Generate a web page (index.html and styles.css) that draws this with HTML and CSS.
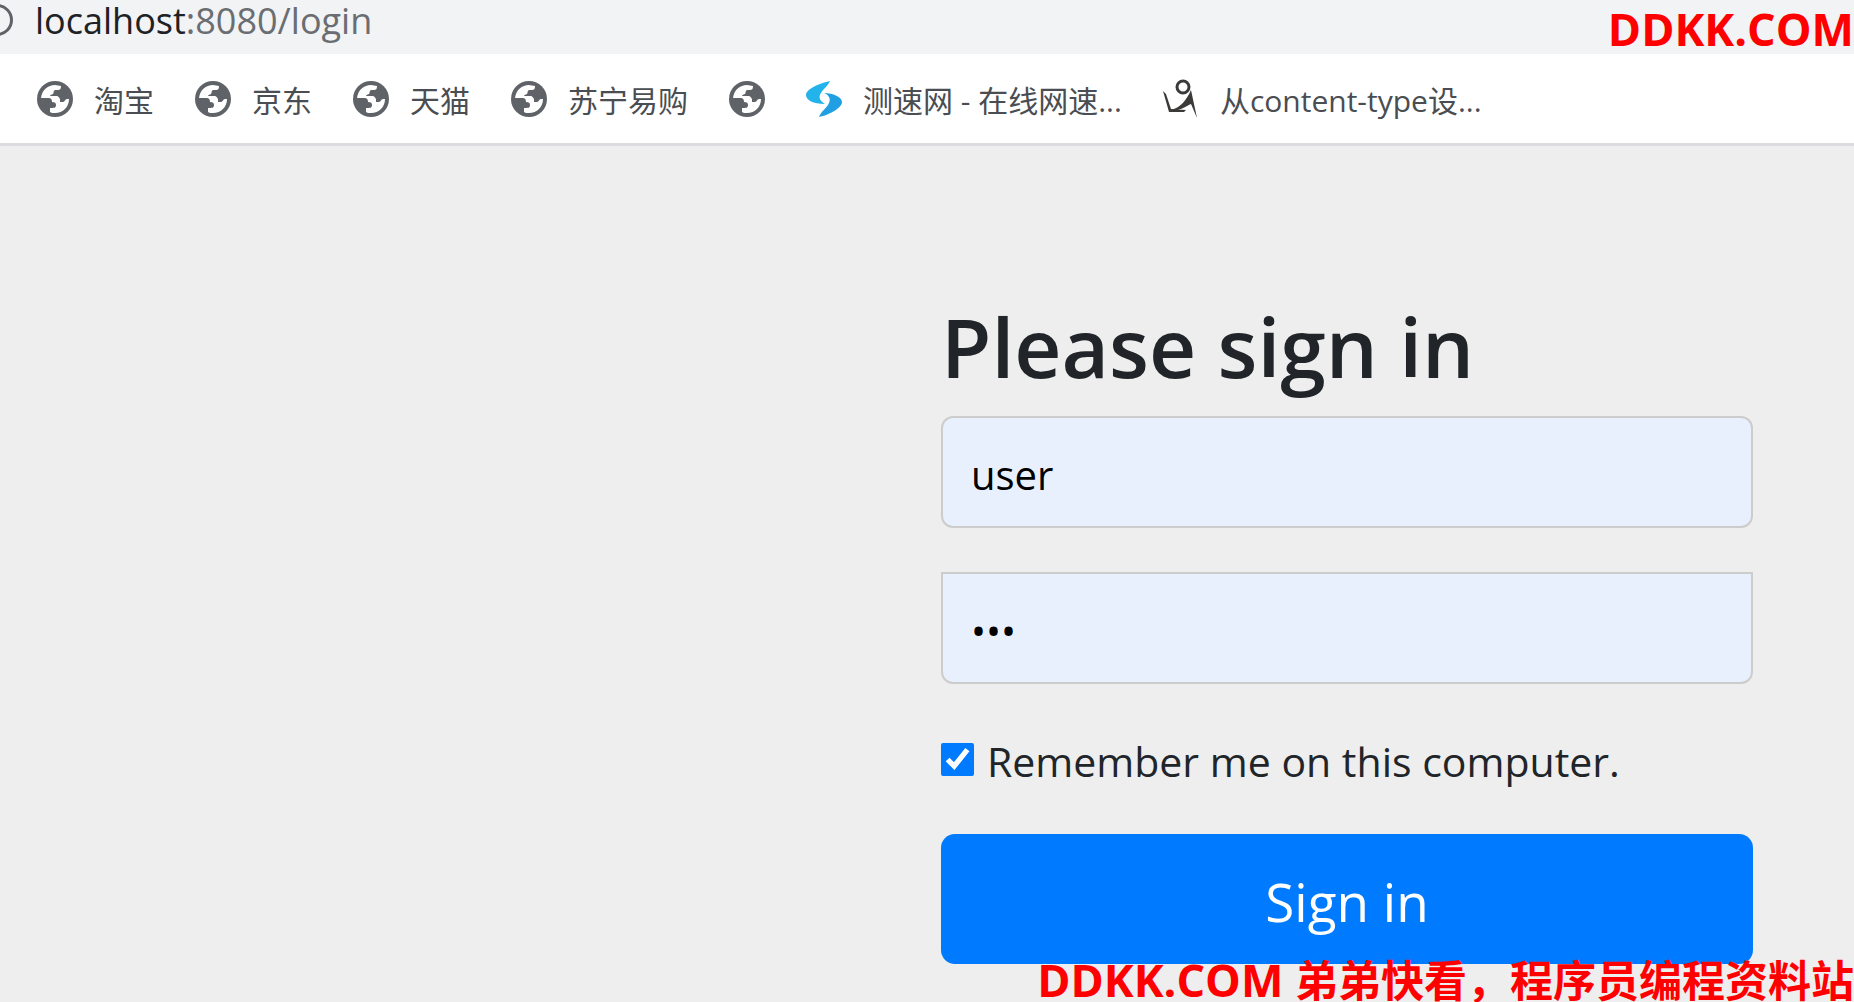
FILE: index.html
```html
<!DOCTYPE html>
<html lang="zh-CN">
<head>
    <meta charset="UTF-8">
    <meta name="viewport" content="width=device-width, initial-scale=1.0">
    <title>Please sign in</title>
    <link rel="stylesheet" href="styles.css">
</head>
<body>

<!-- Globe shared by the bookmarks without a favicon -->
<svg class="sprite" aria-hidden="true">
    <symbol id="globe" viewBox="0 0 36 36">
        <circle cx="18" cy="18" r="18" fill="#5f6368"/>
        <path fill="#fff" d="M4 17C5 9 11 4 18 4l6 1c0 3-1 4-3 4h-3c-2 1-1 3-2 4-2 1-3 1-3 2h6c3 0 3 2 4 3v3h3c2 0 2-3 4-3h2c0 8-6 14-14 14-2 0-4 0-5-1v-4c4 0 6 0 6-3 0-2-1-3-4-3 0-3-1-4-4-4z"/>
    </symbol>
</svg>

<header class="address-bar">
    <span class="site-info"></span>
    <div class="url"><span class="host">localhost</span>:8080/login</div>
    <div class="watermark">DDKK.COM</div>
</header>

<nav class="bookmarks">
    <a href="#"><svg class="icon"><use href="#globe"/></svg><span>淘宝</span></a>
    <a href="#"><svg class="icon"><use href="#globe"/></svg><span>京东</span></a>
    <a href="#"><svg class="icon"><use href="#globe"/></svg><span>天猫</span></a>
    <a href="#"><svg class="icon"><use href="#globe"/></svg><span>苏宁易购</span></a>
    <a href="#" aria-label="Bookmark"><svg class="icon"><use href="#globe"/></svg></a>
    <a href="#">
        <svg class="icon" viewBox="0 0 36 36">
            <path fill="#22b3ea" d="M24 0C14 2 0 8 0 14c0 5 7 9 19 9-5-3-7-7-4-11 2-4 7-7 9-12z"/>
            <path fill="#209fe2" d="M13 36C23 34 36 27 36 21c0-5-9-9-18-9 5 2 7 6 5 10-2 5-8 8-10 14z"/>
        </svg>
        <span>测速网 - 在线网速...</span>
    </a>
    <a href="#">
        <svg class="icon" viewBox="0 0 36 36">
            <circle cx="20" cy="6" r="6" fill="none" stroke="#3c3a39" stroke-width="3"/>
            <path fill="#3c3a39" d="M0 10l3 3 5 15 15 1-2 2H6zM8 29c10-3 15-9 20-20l6 28-6-14c-5 2-10 7-20 6z"/>
        </svg>
        <span>从content-type设...</span>
    </a>
</nav>

<main class="page">
    <form class="form-signin" onsubmit="return false">
        <h2>Please sign in</h2>
        <input class="form-control username" type="text" aria-label="Username" value="user">
        <input class="form-control password" type="password" aria-label="Password" value="123">
        <div class="remember">
            <input id="remember-me" type="checkbox" checked>
            <label for="remember-me">Remember me on this computer.</label>
        </div>
        <button type="submit">Sign in</button>
    </form>
</main>

<div class="watermark watermark-bottom">DDKK.COM <span>弟弟快看，程序员编程资料站</span></div>

</body>
</html>
```
FILE: styles.css
```css
* {
    box-sizing: border-box;
}

body {
    margin: 0;
    min-height: 100vh;
    display: flex;
    flex-direction: column;
    position: relative;
    overflow: hidden;
    background-color: #eee;
    color: #212529;
    font-family: "Open Sans", "Noto Sans CJK SC", sans-serif;
}

.sprite {
    display: none;
}

/* Address bar */
.address-bar {
    display: flex;
    align-items: flex-start;
    height: 54px;
    background-color: #f1f3f4;
}

.site-info {
    width: 32px;
    height: 32px;
    margin-top: 4px;
    margin-left: -19px;
    border: 3px solid #5f6368;
    border-radius: 50%;
}

.url {
    margin-left: 22px;
    font-size: 36px;
    line-height: 42px;
    color: #6a6d71;
}

.host {
    color: #202124;
}

.watermark {
    margin-left: auto;
    font-size: 45px;
    font-weight: bold;
    line-height: 58px;
    color: #f00;
    white-space: nowrap;
}

.watermark-bottom {
    position: absolute;
    right: 0;
    bottom: -8px;
}

.watermark-bottom span {
    font-size: 43px;
}

/* Bookmarks bar */
.bookmarks {
    display: flex;
    align-items: center;
    gap: 41px;
    height: 92px;
    padding: 0 37px;
    background-color: #fff;
    border-bottom: 3px solid #dadce0;
}

.bookmarks a {
    display: flex;
    align-items: center;
    gap: 21px;
    font-size: 30px;
    line-height: 40px;
    color: #4a4d51;
    text-decoration: none;
    white-space: nowrap;
}

.bookmarks span {
    padding-top: 4px;
}

.icon {
    flex: none;
    width: 36px;
    height: 36px;
    overflow: visible;
}

/* Sign in form */
.page {
    flex: 1;
    padding: 150px 101px 36px;
}

.form-signin {
    display: flex;
    flex-direction: column;
    width: 812px;
    max-width: 100%;
    margin-left: auto;
}

.form-signin h2 {
    margin: 0 0 20px;
    font-size: 82px;
    font-weight: 600;
    line-height: 100px;
}

.form-control {
    width: 100%;
    height: 112px;
    padding: 4px 28px 0;
    border: 2px solid #ccc;
    border-radius: 12px;
    background-color: #e8f0fe;
    color: #000;
    font-family: inherit;
    font-size: 40px;
}

.username {
    margin-bottom: 44px;
}

.password {
    border-top-left-radius: 0;
    border-top-right-radius: 0;
}

.remember {
    display: flex;
    align-items: center;
    gap: 13px;
    margin: 48px 0;
    font-size: 41px;
    line-height: 50px;
}

.remember label {
    padding-top: 4px;
}

.remember input {
    width: 33px;
    height: 33px;
    margin: 0;
    accent-color: #007bff;
}

.form-signin button {
    height: 130px;
    padding: 4px 0 0;
    border: 0;
    border-radius: 14px;
    background-color: #007bff;
    color: #fff;
    font-family: inherit;
    font-size: 53px;
}
```
